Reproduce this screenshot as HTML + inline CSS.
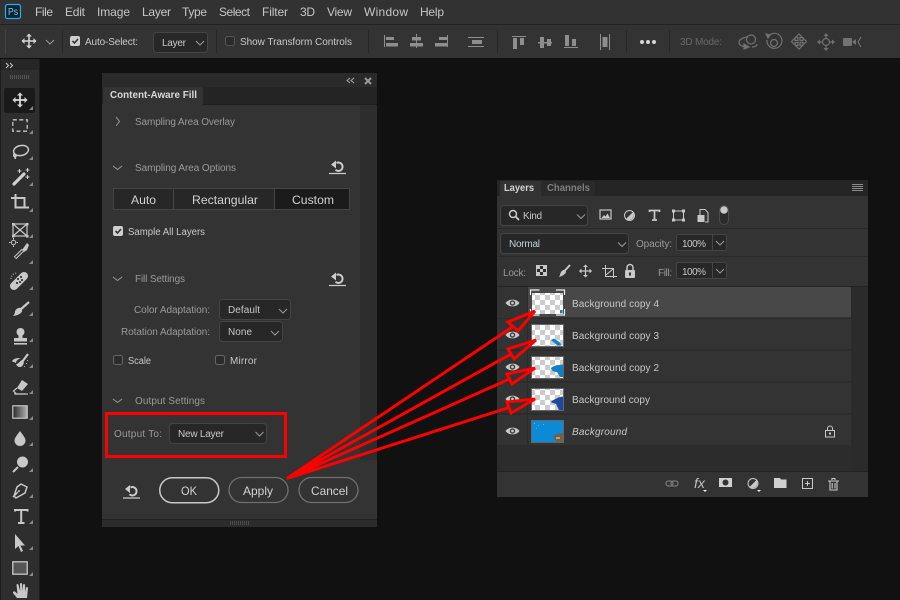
<!DOCTYPE html>
<html><head><meta charset="utf-8"><style>
html,body{margin:0;padding:0;background:#111;width:900px;height:600px;overflow:hidden}
svg{display:block}
text{font-family:"Liberation Sans",sans-serif;font-size:10px;fill:#b4b4b4}
.m{font-size:12px;fill:#c6c6c6}
.b{font-size:12px;fill:#d2d2d2}
.w{fill:#c8c8c8}
.d{fill:#9a9a9a}
.ic{fill:none;stroke:#c8c8c8;stroke-width:1.5}
.f{fill:#c8c8c8;stroke:none}
.dim{fill:#7c7c7c}
.dd{fill:#272727;stroke:#454545}
</style></head><body>
<svg width="900" height="600" viewBox="0 0 900 600" xmlns="http://www.w3.org/2000/svg">
<defs>
<pattern id="ck" width="10" height="10" patternUnits="userSpaceOnUse"><rect width="10" height="10" fill="#fff"/><rect width="5" height="5" fill="#ccc"/><rect x="5" y="5" width="5" height="5" fill="#ccc"/></pattern>
<g id="tri"><path d="M0 0h-4l4-4z" fill="#8a8a8a"/></g>
<g id="eye"><path d="M-7 0C-4-4.500 4-4.500 7 0C4 4.500-4 4.500-7 0Z" fill="#c8c8c8"/><circle r="2.700" fill="#3a3a3a"/><circle r="1.400" fill="#c8c8c8"/></g>
<g id="rst"><path d="M-6.500-3.500L-1.500-7.500V.5z" fill="#ccc"/><path d="M-1-5A4.200 4.200 0 1 1-2 1.800" fill="none" stroke="#ccc" stroke-width="2"/><path d="M-8.500 5.500H8.500" stroke="#ccc" stroke-width="1.300"/></g>
<path id="chev" d="M-4-2L0 2L4-2" fill="none" stroke="#9a9a9a" stroke-width="1"/>
</defs>

<rect width="900" height="600" fill="#111"/>
<!-- top bars -->
<rect width="900" height="24" fill="#323232"/>
<rect y="24" width="900" height="1" fill="#222"/>
<rect y="25" width="900" height="33" fill="#333"/>
<rect y="58" width="900" height="1" fill="#0c0c0c"/>
<rect x="5.500" y="4.500" width="15" height="14" rx="2" fill="#0b2430" stroke="#2fa9e6" stroke-width="1.200"/>
<text x="8" y="15" style="font-size:10px;fill:#7ccbf5" textLength="10" lengthAdjust="spacingAndGlyphs">Ps</text>
<text class="m" x="35" y="16" textLength="18">File</text>
<text class="m" x="65" y="16" textLength="20">Edit</text>
<text class="m" x="97" y="16" textLength="33">Image</text>
<text class="m" x="142" y="16" textLength="29">Layer</text>
<text class="m" x="182" y="16" textLength="25">Type</text>
<text class="m" x="219" y="16" textLength="31">Select</text>
<text class="m" x="262" y="16" textLength="26">Filter</text>
<text class="m" x="300" y="16" textLength="15">3D</text>
<text class="m" x="327" y="16" textLength="25">View</text>
<text class="m" x="364" y="16" textLength="44">Window</text>
<text class="m" x="420" y="16" textLength="24">Help</text>

<!-- options bar -->
<g fill="#272727"><rect x="5" y="30" width="1" height="24" fill="#444"/><rect x="62" y="30" width="1" height="23"/><rect x="216" y="30" width="1" height="23"/><rect x="368" y="30" width="1" height="23"/><rect x="497" y="30" width="1" height="23"/><rect x="626" y="30" width="1" height="23"/><rect x="669" y="30" width="1" height="23"/></g>
<g transform="translate(29,41)" fill="#d0d0d0"><rect x="-7" y="-.8" width="14" height="1.600"/><rect x="-.8" y="-7" width="1.600" height="14"/><path d="M-7.500 0l3-3v6zM7.500 0l-3-3v6zM0-7.500l-3 3h6zM0 7.500l-3-3h6z"/></g>
<use href="#chev" x="50" y="42"/>
<rect x="70" y="36" width="10" height="10" rx="2" fill="#cfcfcf"/><path d="M72.500 41l2 2 3.500-4" fill="none" stroke="#333" stroke-width="1.600"/>
<text x="85" y="45" class="w" textLength="53">Auto-Select:</text>
<rect class="dd" x="153.500" y="32.500" width="54" height="20" rx="3"/>
<text x="162" y="46" class="w" textLength="24">Layer</text>
<use href="#chev" x="200" y="43"/>
<rect x="225.500" y="36.500" width="9" height="9" rx="2" fill="#2b2b2b" stroke="#555"/>
<text x="240" y="45" class="w" textLength="112">Show Transform Controls</text>
<!-- align icons -->
<g fill="#8e8e8e">
<rect x="384" y="35" width="1" height="12"/><rect x="386" y="37" width="8" height="3"/><rect x="386" y="43" width="12" height="3.500"/>
<rect x="416" y="34" width="1" height="14"/><rect x="412" y="37" width="9" height="3.500"/><rect x="410" y="43" width="13" height="3.500"/>
<rect x="447" y="35" width="1" height="12"/><rect x="439" y="37" width="8" height="3"/><rect x="435" y="43" width="12" height="3.500"/>
<rect x="468" y="37" width="16" height="1"/><rect x="472" y="40" width="10" height="4"/><rect x="468" y="46" width="16" height="1"/>
<rect x="512" y="36" width="14" height="1"/><rect x="513" y="38" width="4" height="11"/><rect x="520" y="38" width="4" height="7"/>
<rect x="538" y="42" width="14" height="1.500"/><rect x="540" y="37" width="4" height="11"/><rect x="547" y="39" width="4" height="7"/>
<rect x="564" y="47" width="14" height="1"/><rect x="565" y="35" width="4" height="11"/><rect x="572" y="39" width="4" height="7"/>
<rect x="600" y="34" width="1" height="16"/><rect x="609" y="34" width="1" height="16"/><rect x="602.500" y="37" width="5" height="10"/>
</g>
<g fill="#d5d5d5"><circle cx="642" cy="42" r="2"/><circle cx="648" cy="42" r="2"/><circle cx="654" cy="42" r="2"/></g>
<text x="680" y="45" style="fill:#6a6a6a" textLength="42">3D Mode:</text>
<g fill="none" stroke="#727272" stroke-width="1.200">
<circle cx="751" cy="39.500" r="4.500"/><path d="M747 37c-5 1-8 3-8 5.500 0 2 2 3.500 5 4M752 47c3 0 5-1 5-3"/><path d="M744 44l5 3-5 2z" fill="#727272"/>
<path d="M768 37a7.500 7.500 0 1 1-1 3"/><path d="M766 34l4 1-2 3z" fill="#727272"/><circle cx="774" cy="43" r="3.500"/>
<path d="M799 34l3.500 3.500h-2.500v3h3v-2.500l3.500 3.500-3.500 3.500v-2.500h-3v3h2.500l-3.500 3.500-3.500-3.500h2.500v-3h-3v2.500l-3.500-3.500 3.500-3.500v2.500h3v-3h-2.500z"/>
<circle cx="826" cy="42" r="3.500"/><path d="M826 34v4M826 46v4M818 42h4M830 42h4"/>
<path d="M861 37l-3 5 3 5"/>
</g>
<g fill="#727272"><path d="M826 33l-2.500 3h5zM826 51l-2.500-3h5zM817 42l3-2.500v5zM835 42l-3-2.500v5z"/><rect x="843" y="38" width="9" height="8" rx="1"/><path d="M852 42l4-3v6z"/></g>

<!-- left toolbar -->
<rect x="0" y="59" width="40" height="541" fill="#2e2e2e"/>
<rect x="0" y="59" width="40" height="11" fill="#262626"/>
<rect x="39" y="59" width="1" height="541" fill="#1c1c1c"/>
<rect x="0" y="59" width="1" height="541" fill="#1c1c1c"/>
<path d="M6 63l2.500 2.500L6 68M10 63l2.500 2.500L10 68" fill="none" stroke="#bbb" stroke-width="1.100"/>
<g fill="#555"><rect x="10" y="75" width="1" height="4"/><rect x="12" y="75" width="1" height="4"/><rect x="14" y="75" width="1" height="4"/><rect x="16" y="75" width="1" height="4"/><rect x="18" y="75" width="1" height="4"/><rect x="20" y="75" width="1" height="4"/><rect x="22" y="75" width="1" height="4"/><rect x="24" y="75" width="1" height="4"/><rect x="26" y="75" width="1" height="4"/><rect x="28" y="75" width="1" height="4"/></g>
<rect x="4" y="88" width="31" height="25" rx="2" fill="#1a1a1a"/>
<!-- move -->
<g transform="translate(20,100)" fill="#d8d8d8"><rect x="-6" y="-.9" width="12" height="1.800"/><rect x="-.9" y="-6" width="1.800" height="12"/><path d="M-7.500 0l3-3v6zM7.500 0l-3-3v6zM0-7.500l-3 3h6zM0 7.500l-3-3h6z"/></g>
<!-- marquee -->
<rect x="12.800" y="119.800" width="14.400" height="11.400" fill="none" stroke="#c8c8c8" stroke-width="1.300" stroke-dasharray="4 2.500"/>
<!-- lasso -->
<g class="ic" stroke-width="1.300"><ellipse cx="21" cy="150.500" rx="7.500" ry="5" transform="rotate(-12 21 150.500)"/><path d="M14 154c-1 3 2 4 2 2s-2-1-.5 3"/></g>
<!-- wand -->
<path d="M14 184L24 174" stroke="#d0d0d0" stroke-width="3.200" stroke-linecap="round"/>
<g fill="#d0d0d0"><path d="M19 169h1v4h-1zM17.500 170.500h4v1h-4zM27 168h1v4h-1zM25.500 169.500h4v1h-4zM27 175h1v4h-1zM25.500 176.500h4v1h-4z"/></g>
<!-- crop -->
<path d="M11 198H24.500V208M15.500 194V207.500H29" fill="none" stroke="#c8c8c8" stroke-width="2"/>
<!-- frame -->
<g fill="none" stroke="#c8c8c8" stroke-width="1.200"><rect x="13" y="224" width="14" height="12"/><path d="M13 224L27 236M27 224L13 236"/></g>
<g fill="#c8c8c8"><rect x="12" y="223" width="2.500" height="2.500"/><rect x="26" y="223" width="2.500" height="2.500"/><rect x="12" y="235" width="2.500" height="2.500"/><rect x="26" y="235" width="2.500" height="2.500"/></g>
<!-- eyedropper -->
<circle cx="13.500" cy="242.500" r="2.200" fill="none" stroke="#c8c8c8"/><path d="M13.500 238v1.500M13.500 245.500v1.500M9 242.500h1.500M16.500 242.500h1.500" stroke="#c8c8c8"/>
<path d="M15 258L23 250" stroke="#c8c8c8" stroke-width="3.500" fill="none"/><path d="M15.500 257.500L23 250" stroke="#2e2e2e" stroke-width="1.300"/><path d="M22 250l5-7 2 2-2 5-3 2z" fill="#c8c8c8"/>
<!-- heal -->
<path d="M14 286l10-10" stroke="#c8c8c8" stroke-width="8" stroke-linecap="round"/>
<g fill="#444"><rect x="17" y="278" width="2" height="2"/><rect x="21" y="279" width="2" height="2"/><rect x="19" y="281" width="2" height="2"/><rect x="16" y="282" width="2" height="2"/><rect x="20" y="276" width="2" height="2"/></g>
<path d="M11 279a6 6 0 0 1 6-6" fill="none" stroke="#c8c8c8" stroke-dasharray="1 1.500"/>
<!-- brush -->
<path d="M29 302L20 310" stroke="#c8c8c8" stroke-width="2.200"/><path d="M21 308c3 3 0 7-8 8 1-1 2-3 2-4 0-3 4-5 6-4z" fill="#c8c8c8"/>
<!-- stamp -->
<g fill="#c8c8c8"><circle cx="20.500" cy="332" r="4"/><path d="M18.500 334h4v5h-4z"/><path d="M14 338h13v3.500H14z"/><rect x="14" y="343" width="13" height="1.600"/></g>
<!-- smudge -->
<path d="M28 354l-6 8" stroke="#c8c8c8" stroke-width="2.200"/><path d="M23 360c2 2 0 7-3 7-2 0-3-1-4-3 3 0 4-4 7-4z" fill="#c8c8c8"/><path d="M12 361c2-3 6-3 9-3-3 1-5 3-5 5-2-1-3-1-4-2z" fill="#c8c8c8"/><g fill="#aaa"><rect x="27" y="360" width="1" height="1"/><rect x="26" y="363" width="1" height="1"/><rect x="24" y="366" width="1" height="1"/></g>
<!-- eraser -->
<path d="M22 380l6 4-6 7-5-3z" fill="#c8c8c8"/><path d="M17 388l-3.500 3 3 3h9" fill="none" stroke="#c8c8c8" stroke-width="1.200"/><path d="M14 394h14" stroke="#c8c8c8" stroke-width="1.100"/>
<!-- gradient -->
<defs><linearGradient id="gr"><stop offset="0" stop-color="#2a2a2a"/><stop offset="1" stop-color="#b0b0b0"/></linearGradient></defs>
<rect x="12.800" y="405.800" width="14.400" height="12.400" fill="url(#gr)" stroke="#c8c8c8" stroke-width="1.200"/>
<!-- drop -->
<path d="M20 431c3 4 5.500 7 5.500 9.500a5.500 5.500 0 0 1-11 0c0-2.500 2.500-5.500 5.500-9.500z" fill="#c8c8c8"/>
<!-- dodge -->
<circle cx="22.500" cy="462" r="5.500" fill="#c8c8c8"/><path d="M18 467l-5 5" stroke="#c8c8c8" stroke-width="2"/>
<!-- pen -->
<g class="ic" stroke-width="1.200"><path d="M21 484l6 3-2 6-9 5-2-2 3-9z"/><path d="M13 497l5-5"/></g><circle cx="19" cy="491" r="1" fill="#c8c8c8"/>
<!-- type -->
<path d="M15 511.500V510H27.500V511.500M21.200 510V523M18 523H24.500" fill="none" stroke="#c8c8c8" stroke-width="2"/>
<!-- arrow -->
<path d="M15 534V549l3.500-3 2.500 6 2-1-2.500-5.500H25z" fill="#c8c8c8"/>
<!-- rect -->
<rect x="12.800" y="561.800" width="14.400" height="12.400" fill="#555" stroke="#c8c8c8" stroke-width="1.300"/>
<!-- hand -->
<path d="M13 593l4 5h10l1-10a1 1 0 0 0-2 0l-.5 4-.5-7a1 1 0 0 0-2 0v6l-1-7a1 1 0 0 0-2 0l.2 7-1.700-6a1 1 0 0 0-2 0l1 9-2-2c-1-1-3-1-2.500 1z" fill="#c8c8c8"/>
<!-- corner triangles -->
<g><use href="#tri" x="33" y="110"/><use href="#tri" x="33" y="134"/><use href="#tri" x="33" y="160"/><use href="#tri" x="33" y="186"/><use href="#tri" x="33" y="212"/><use href="#tri" x="33" y="238"/><use href="#tri" x="33" y="264"/><use href="#tri" x="33" y="290"/><use href="#tri" x="33" y="316"/><use href="#tri" x="33" y="342"/><use href="#tri" x="33" y="368"/><use href="#tri" x="33" y="394"/><use href="#tri" x="33" y="420"/><use href="#tri" x="33" y="446"/><use href="#tri" x="33" y="472"/><use href="#tri" x="33" y="498"/><use href="#tri" x="33" y="524"/><use href="#tri" x="33" y="550"/><use href="#tri" x="33" y="576"/></g>

<!-- Content-aware fill panel -->
<rect x="102" y="73" width="275" height="454" fill="#333"/>
<rect x="102" y="73" width="275" height="14" fill="#2a2a2a"/>
<rect x="102" y="87" width="275" height="17" fill="#242424"/>
<rect x="103" y="87" width="100" height="18" fill="#333"/>
<rect x="203" y="104" width="174" height="1" fill="#1c1c1c"/>
<rect x="360" y="105" width="17" height="355" fill="#2d2d2d"/>
<rect x="102" y="519" width="275" height="1" fill="#222"/>
<rect x="102" y="520" width="275" height="7" fill="#2c2c2c"/>
<g fill="#4c4c4c"><rect x="230" y="521" width="1" height="4"/><rect x="232" y="521" width="1" height="4"/><rect x="234" y="521" width="1" height="4"/><rect x="236" y="521" width="1" height="4"/><rect x="238" y="521" width="1" height="4"/><rect x="240" y="521" width="1" height="4"/><rect x="242" y="521" width="1" height="4"/><rect x="244" y="521" width="1" height="4"/><rect x="246" y="521" width="1" height="4"/><rect x="248" y="521" width="1" height="4"/></g>
<path d="M350 78l-3 2.500 3 2.500M354 78l-3 2.500 3 2.500" fill="none" stroke="#aaa" stroke-width="1"/>
<path d="M365 78l6 6M371 78l-6 6" stroke="#999" stroke-width="2"/>
<text x="110" y="98" style="font-size:10px;font-weight:bold;fill:#d8d8d8" textLength="87" lengthAdjust="spacingAndGlyphs">Content-Aware Fill</text>

<path d="M116 117l3.500 4.500-3.500 4.500" fill="none" stroke="#999"/>
<text x="135" y="125" class="d" textLength="100">Sampling Area Overlay</text>
<path d="M113 166l4.500 3.500 4.500-3.500" fill="none" stroke="#999"/>
<text x="135" y="171" class="d" textLength="101">Sampling Area Options</text>
<use href="#rst" x="337.500" y="168"/>
<rect x="113.500" y="188.500" width="236" height="21" fill="#272727" stroke="#454545"/>
<rect x="275" y="189" width="74" height="20" fill="#1b1b1b"/>
<path d="M173.500 189v20M274.500 189v20" stroke="#454545"/>
<text x="131" y="204" class="b" textLength="25" lengthAdjust="spacingAndGlyphs">Auto</text>
<text x="192" y="204" class="b" textLength="66" lengthAdjust="spacingAndGlyphs">Rectangular</text>
<text x="292" y="204" class="b" textLength="42" lengthAdjust="spacingAndGlyphs">Custom</text>
<rect x="113" y="226" width="10" height="10" rx="2" fill="#cfcfcf"/><path d="M115.500 231l2 2 3.500-4" fill="none" stroke="#333" stroke-width="1.600"/>
<text x="128" y="235" class="w" textLength="77" lengthAdjust="spacingAndGlyphs">Sample All Layers</text>
<path d="M113 277l4.500 3.500 4.500-3.500" fill="none" stroke="#999"/>
<text x="135" y="282" class="d" textLength="50">Fill Settings</text>
<use href="#rst" x="337.500" y="280"/>

<text x="134" y="313" class="d" textLength="76">Color Adaptation:</text>
<rect class="dd" x="219.500" y="299.500" width="71" height="20" rx="3"/>
<text x="228" y="313" class="w" textLength="32">Default</text>
<use href="#chev" x="283" y="311"/>
<text x="121" y="335" class="d" textLength="89">Rotation Adaptation:</text>
<rect class="dd" x="219.500" y="321.500" width="63" height="20" rx="3"/>
<text x="228" y="335" class="w" textLength="24">None</text>
<use href="#chev" x="275" y="333"/>
<rect x="113.500" y="355.500" width="9" height="9" rx="2" fill="#2b2b2b" stroke="#666"/>
<text x="128" y="364" class="w" textLength="23" lengthAdjust="spacingAndGlyphs">Scale</text>
<rect x="215.500" y="355.500" width="9" height="9" rx="2" fill="#2b2b2b" stroke="#666"/>
<text x="230" y="364" class="w" textLength="27">Mirror</text>
<path d="M113 399l4.500 3.500 4.500-3.500" fill="none" stroke="#999"/>
<text x="135" y="404" class="d" textLength="70">Output Settings</text>

<text x="114" y="437" class="d" textLength="48">Output To:</text>
<rect class="dd" x="169.500" y="423.500" width="97" height="20" rx="3"/>
<text x="178" y="437" class="w" textLength="46">New Layer</text>
<use href="#chev" x="259.500" y="434"/>

<use href="#rst" x="131.500" y="492.500"/>
<rect x="159.750" y="477.750" width="59" height="25" rx="12.500" fill="none" stroke="#c8c8c8" stroke-width="1.500"/>
<text x="181" y="495" class="b" textLength="16" lengthAdjust="spacingAndGlyphs">OK</text>
<rect x="229" y="477.500" width="59" height="25" rx="12.500" fill="none" stroke="#707070" stroke-width="1.300"/>
<text x="243" y="495" class="b" textLength="30" lengthAdjust="spacingAndGlyphs">Apply</text>
<rect x="299" y="477.500" width="59" height="25" rx="12.500" fill="none" stroke="#707070" stroke-width="1.300"/>
<text x="311" y="495" class="b" textLength="37" lengthAdjust="spacingAndGlyphs">Cancel</text>

<!-- layers panel -->
<rect x="497" y="180" width="371" height="317" fill="#2c2c2c"/>
<rect x="497" y="180" width="371" height="16" fill="#252525"/>
<rect x="500" y="181" width="41" height="16" fill="#333"/>
<rect x="541" y="181" width="54" height="15" fill="#2a2a2a"/>
<rect x="497" y="196" width="371" height="90" fill="#333"/>
<text x="504" y="191" style="font-size:10px;font-weight:bold;fill:#d4d4d4" textLength="30" lengthAdjust="spacingAndGlyphs">Layers</text>
<text x="547" y="191" style="font-size:10px;font-weight:bold;fill:#7e7e7e" textLength="43" lengthAdjust="spacingAndGlyphs">Channels</text>
<path d="M852 184.500h11M852 186.500h11M852 188.500h11M852 190.500h11" stroke="#8c8c8c"/>
<rect x="497" y="228" width="371" height="1" fill="#292929"/>
<rect x="497" y="256" width="371" height="1" fill="#292929"/>
<rect x="497" y="286" width="371" height="1" fill="#232323"/>

<rect class="dd" x="500.500" y="205.500" width="87" height="20" rx="3"/>
<circle cx="513" cy="214" r="3.500" fill="none" stroke="#d0d0d0" stroke-width="1.400"/><path d="M515.500 216.500l3.500 3.500" stroke="#d0d0d0" stroke-width="1.800"/>
<text x="523" y="219" class="w" textLength="19">Kind</text>
<use href="#chev" x="581" y="216.500"/>
<rect x="600" y="210" width="11" height="9" fill="none" stroke="#c8c8c8" stroke-width="1.200"/><path d="M601.500 218l2.500-3 1.500 1.500 2-3 2.500 4.500z" fill="#c8c8c8"/>
<circle cx="629.500" cy="215.500" r="5" fill="none" stroke="#c8c8c8" stroke-width="1"/><path d="M633 212a5 5 0 0 1-7 7z" fill="#c8c8c8"/>
<path d="M649.500 212v-1.500h10v1.500M654.500 210.500V220M652 220h5" fill="none" stroke="#c8c8c8" stroke-width="1.700"/>
<rect x="673.500" y="211" width="10" height="9" fill="none" stroke="#c8c8c8"/><g fill="#c8c8c8"><rect x="672" y="209.500" width="3" height="3"/><rect x="682" y="209.500" width="3" height="3"/><rect x="672" y="218.500" width="3" height="3"/><rect x="682" y="218.500" width="3" height="3"/></g>
<path d="M700 215v-5.500h5l3 3V222h-3" fill="none" stroke="#c8c8c8"/><rect x="697.500" y="215" width="7" height="7" fill="#c8c8c8"/>
<rect x="719.500" y="205.500" width="9" height="19" rx="4.500" fill="#2a2a2a" stroke="#4c4c4c"/><circle cx="724" cy="210" r="3.800" fill="#c8c8c8"/>

<rect class="dd" x="500.500" y="233.500" width="128" height="20" rx="3"/>
<text x="509" y="247" style="fill:#c0d0e0" textLength="31">Normal</text>
<use href="#chev" x="622" y="244.500"/>
<text x="636" y="247" class="d" textLength="36">Opacity:</text>
<rect class="dd" x="676.500" y="234.500" width="50" height="16" rx="2"/>
<path d="M712.500 235v15" stroke="#454545"/>
<text x="682" y="247" class="w" textLength="24">100%</text>
<use href="#chev" x="720" y="243"/>

<text x="503" y="276" class="d" textLength="23">Lock:</text>
<rect x="536.500" y="265.500" width="10" height="10" fill="#2a2a2a" stroke="#c8c8c8"/><g fill="#c8c8c8"><rect x="537" y="266" width="3" height="3"/><rect x="543" y="266" width="3" height="3"/><rect x="540" y="269" width="3" height="3"/><rect x="537" y="272" width="3" height="3"/><rect x="543" y="272" width="3" height="3"/></g>
<path d="M570 265l-5.500 6" stroke="#c8c8c8" stroke-width="2"/><path d="M565 270c2 1.500 1 5-6 7 1-1.500 1-3 2-5 1-1.500 2.500-2.500 4-2z" fill="#c8c8c8"/>
<g transform="translate(585.500,271)" fill="#c8c8c8"><rect x="-5" y="-.6" width="10" height="1.200"/><rect x="-.6" y="-5" width="1.200" height="10"/><path d="M-6.500 0l2.500-2.500v5zM6.500 0l-2.500-2.500v5zM0-6.500l-2.500 2.500h5zM0 6.500l-2.500-2.500h5z"/></g>
<path d="M605.500 265v11.500H617M602 268.500h11.500V278M606 275l7-6" fill="none" stroke="#c8c8c8" stroke-width="1"/>
<rect x="625" y="270" width="10" height="8" rx="1" fill="#c8c8c8"/><path d="M627 270v-2.500a3 3 0 0 1 6 0V270" fill="none" stroke="#c8c8c8" stroke-width="1.500"/><rect x="629" y="272.500" width="2" height="3" fill="#333"/>
<text x="658" y="276" class="d" textLength="14">Fill:</text>
<rect class="dd" x="676.500" y="262.500" width="50" height="16" rx="2"/>
<path d="M712.500 263v15" stroke="#454545"/>
<text x="682" y="275" class="w" textLength="24">100%</text>
<use href="#chev" x="720" y="271"/>

<!-- rows -->
<rect x="497" y="287" width="354" height="31" fill="#333"/>
<rect x="528" y="287" width="323" height="30" fill="#484848"/>
<rect x="497" y="319" width="354" height="30" fill="#333"/>
<rect x="497" y="351" width="354" height="30" fill="#333"/>
<rect x="497" y="383" width="354" height="30" fill="#333"/>
<rect x="497" y="415" width="354" height="30" fill="#333"/>
<rect x="851" y="287" width="17" height="185" fill="#2b2b2b"/>
<path d="M527.500 287v158" stroke="#2b2b2b"/>
<use href="#eye" x="512.500" y="303"/><use href="#eye" x="512.500" y="335"/><use href="#eye" x="512.500" y="367"/><use href="#eye" x="512.500" y="399"/><use href="#eye" x="512.500" y="431"/>

<rect x="532" y="293" width="31" height="21" fill="url(#ck)"/>
<rect x="560" y="310" width="2.500" height="3" fill="#0d82c8"/>
<path d="M530.500 295v-5h9M556 290h8.500v5M564.500 309v6H556M539.500 315H530.500v-6" fill="none" stroke="#eee" stroke-width="1.200"/>

<rect x="531.500" y="324.500" width="32" height="22" fill="url(#ck)" stroke="#666"/>
<path d="M551 340l3-1.500 6 4 1.500 3h-4z" fill="#0d82c8"/>
<rect x="531.500" y="356.500" width="32" height="22" fill="url(#ck)" stroke="#666"/>
<path d="M551 368c2-2 6-3 12-3.500v12.500h-3l-3-5c-3 0-6-1.500-6-4z" fill="#0d82c8"/>
<rect x="531.500" y="388.500" width="32" height="22" fill="url(#ck)" stroke="#666"/>
<path d="M551 402c3-3 8-5 12-5.500v13.500h-4l-3-6c-2-1-4-1-5-2z" fill="#1b4b9c"/>
<rect x="531.500" y="420.500" width="32" height="22" fill="#0b8bd6" stroke="#666"/>
<path d="M553 436c3-2 7-3 10-3v9h-7c0-3-3-3-3-6z" fill="#6f6050"/><rect x="556" y="437" width="4" height="2" fill="#c89d60"/>
<g fill="#4cb8ee"><rect x="534" y="423" width="1" height="1"/><rect x="538" y="425" width="1" height="1"/><rect x="536" y="428" width="1" height="1"/><rect x="543" y="424" width="1" height="1"/></g>

<text x="572" y="307" class="w" textLength="87">Background copy 4</text>
<text x="572" y="339" class="w" textLength="87">Background copy 3</text>
<text x="572" y="371" class="w" textLength="87">Background copy 2</text>
<text x="572" y="403" class="w" textLength="78">Background copy</text>
<text x="572" y="435" class="w" style="font-style:italic" textLength="55">Background</text>
<rect x="825.500" y="430.500" width="9" height="6.500" fill="none" stroke="#c8c8c8"/><path d="M827.500 430.500v-2a2.500 2.500 0 0 1 5 0v2" fill="none" stroke="#c8c8c8"/><rect x="829" y="432.500" width="2" height="2" fill="#c8c8c8"/>

<!-- footer -->
<rect x="497" y="471" width="371" height="1" fill="#222"/>
<rect x="497" y="472" width="371" height="25" fill="#333"/>
<g fill="none" stroke="#777" stroke-width="1.300"><rect x="666" y="481" width="7" height="5" rx="2.500"/><rect x="671" y="481" width="7" height="5" rx="2.500"/></g>
<text x="694" y="488" style="font:italic 14px 'Liberation Sans',sans-serif;fill:#c0c0c0" textLength="11" lengthAdjust="spacingAndGlyphs">fx</text>
<path d="M703 490h4l-2 2z" fill="#eee"/>
<rect x="719" y="478" width="13" height="9" fill="#d0d0d0"/><circle cx="725.500" cy="482.500" r="3" fill="#333"/>
<circle cx="753" cy="483.500" r="5" fill="none" stroke="#c8c8c8"/><path d="M756.500 480a5 5 0 0 1-7 7z" fill="#c8c8c8"/>
<path d="M757 490h4l-2 2z" fill="#eee"/>
<path d="M774 478h6l1 1.500h5.500V488H774z" fill="#d0d0d0"/>
<rect x="802.500" y="478.500" width="10" height="10" fill="none" stroke="#c8c8c8"/><path d="M807.500 481v5M805 483.500h5" stroke="#c8c8c8"/>
<path d="M828 481h11M830 481v9h7v-9M832 480v-1.500h3V480M832.200 483v5.500M835 483v5.500" fill="none" stroke="#c8c8c8" stroke-width="1.100"/>

<!-- red annotations -->
<rect x="106.500" y="413.500" width="179" height="43" fill="none" stroke="#f00" stroke-width="3"/>
<g fill="none" stroke="#f00" stroke-width="3" stroke-linejoin="miter">
<path d="M287 478.500L513 326.500"/>
<path d="M287 478.500L511 354"/>
<path d="M287 478.500L509.500 379"/>
<path d="M287 478.500L509 407.500"/>
<path d="M535 311L508 322L518 331Z"/>
<path d="M536 340L508 349L514 359Z"/>
<path d="M535 368L507 374L512 384Z"/>
<path d="M535 399L507 402L511 413Z"/>
</g>
</svg>
</body></html>
